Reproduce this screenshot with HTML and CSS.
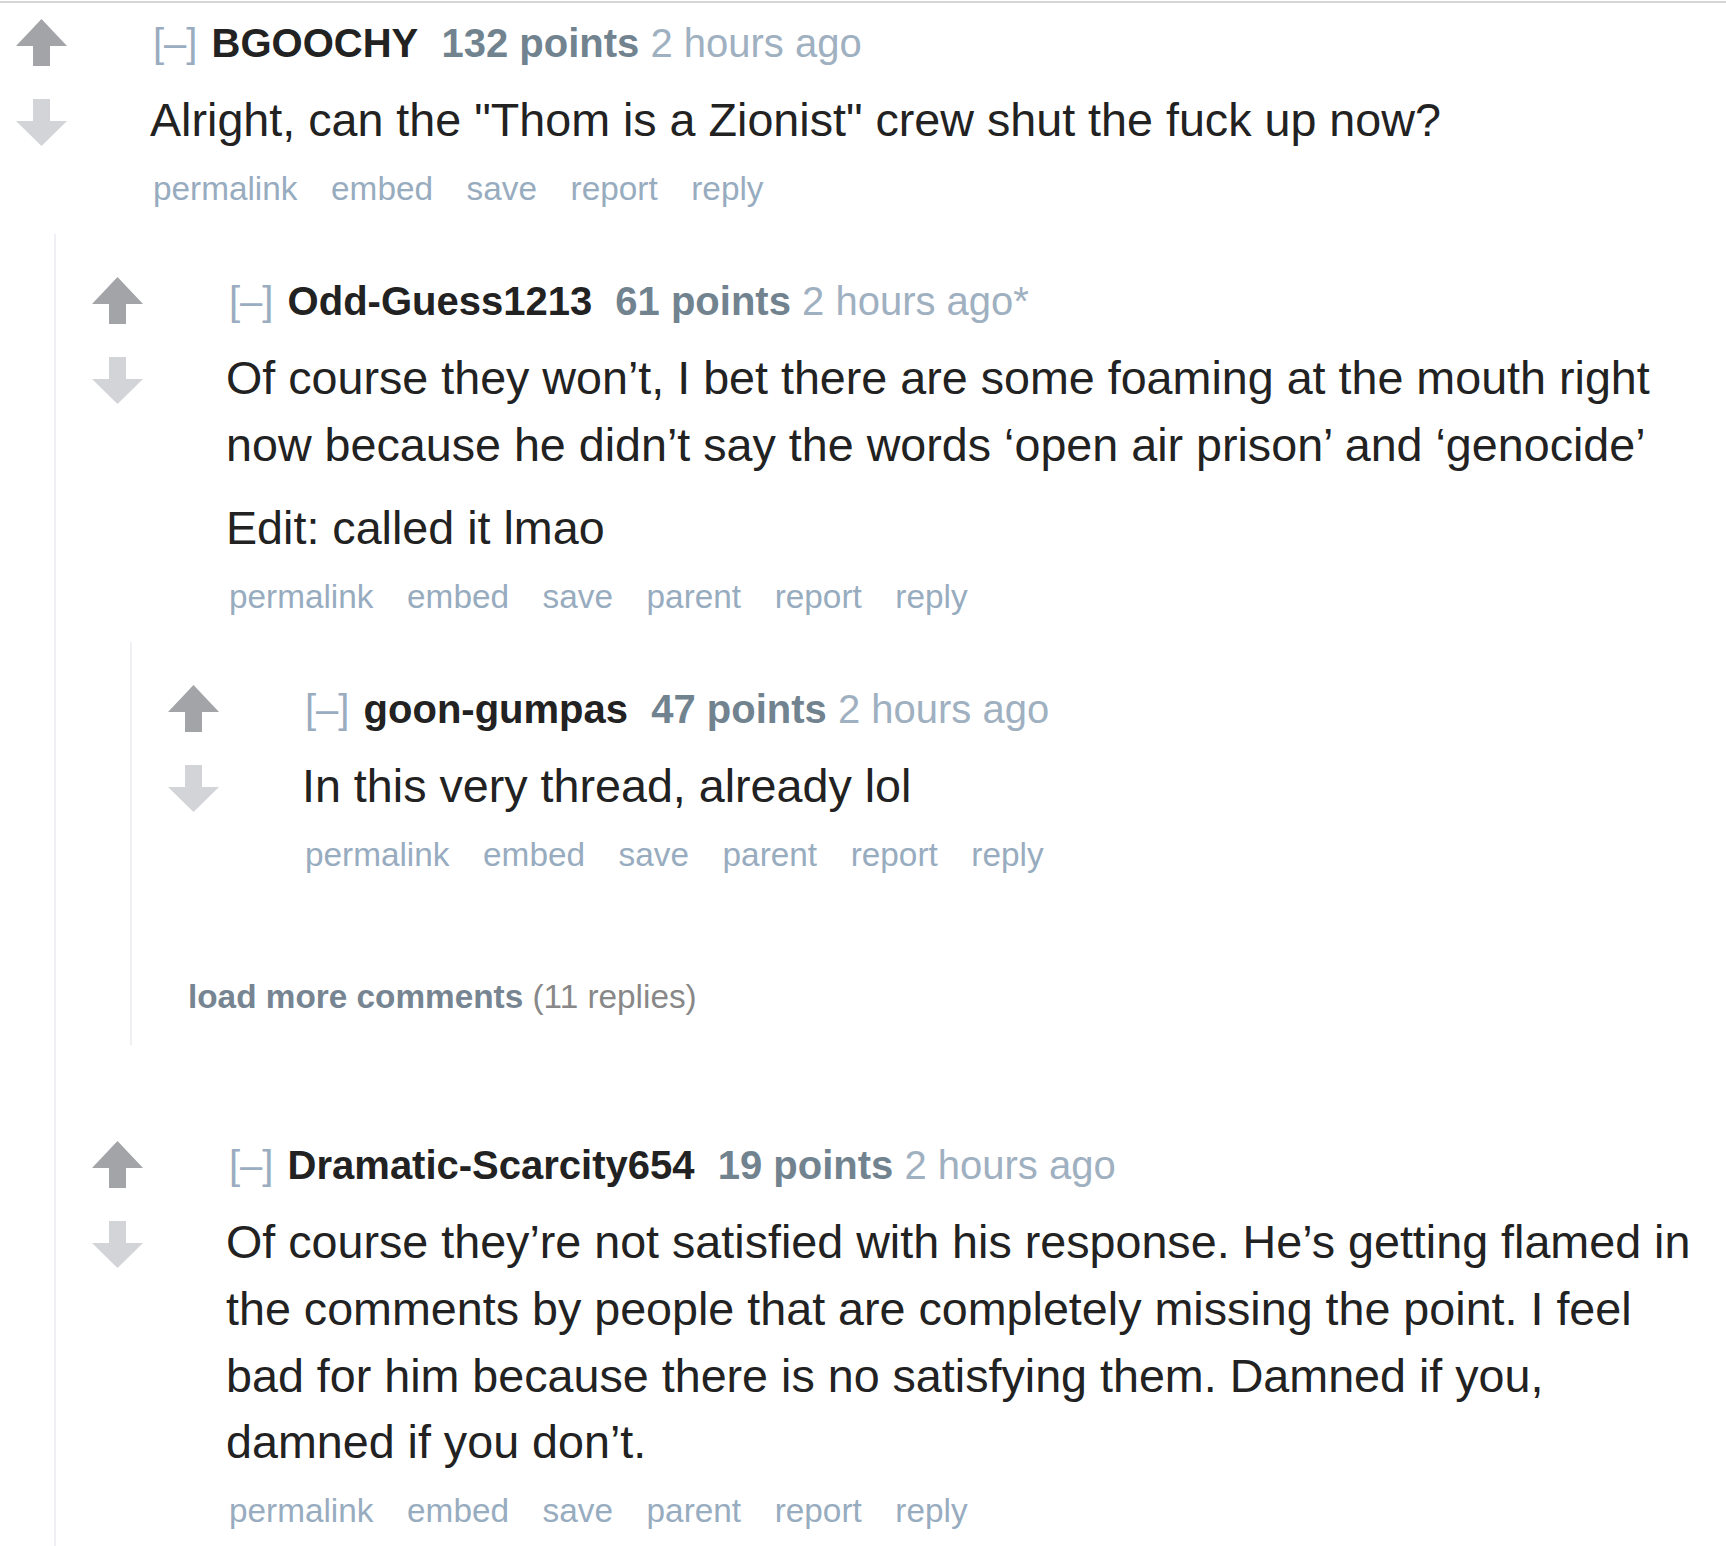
FILE: index.html
```html
<!DOCTYPE html>
<html lang="en">
  <head>
    <meta charset="UTF-8" />
    <meta name="viewport" content="width=device-width, initial-scale=1.0" />
    <title>Comments</title>
    <link rel="stylesheet" href="styles.css">
  </head>
  <body>
    <div class="page">
      <div class="thread">

        <!-- top level comment -->
        <div class="comment">
          <div class="comment-main">
            <div class="midcol">
              <svg class="arrow up" viewBox="0 0 51 47"><polygon points="25.5,0 51,27 34,27 34,47 17,47 17,27 0,27" /></svg>
              <svg class="arrow down" viewBox="0 0 51 47"><polygon points="17,0 34,0 34,22 51,22 25.5,47 0,22 17,22" /></svg>
            </div>
            <div class="entry">
              <p class="tagline"><a class="expand" href="#">[–]</a> <a class="author" href="#">BGOOCHY</a> <span class="score">132 points</span> <time>2 hours ago</time></p>
              <div class="md">
                <p>Alright, can the "Thom is a Zionist" crew shut the fuck up now?</p>
              </div>
              <ul class="buttons">
                <li><a href="#">permalink</a></li>
                <li><a href="#">embed</a></li>
                <li><a href="#">save</a></li>
                <li><a href="#">report</a></li>
                <li><a href="#">reply</a></li>
              </ul>
            </div>
          </div>

          <div class="child">
            <div class="comment">
              <div class="comment-main">
                <div class="midcol">
                  <svg class="arrow up" viewBox="0 0 51 47"><polygon points="25.5,0 51,27 34,27 34,47 17,47 17,27 0,27" /></svg>
                  <svg class="arrow down" viewBox="0 0 51 47"><polygon points="17,0 34,0 34,22 51,22 25.5,47 0,22 17,22" /></svg>
                </div>
                <div class="entry">
                  <p class="tagline"><a class="expand" href="#">[–]</a> <a class="author" href="#">Odd-Guess1213</a> <span class="score">61 points</span> <time>2 hours ago*</time></p>
                  <div class="md">
                    <p>Of course they won’t, I bet there are some foaming at the mouth right now because he didn’t say the words ‘open air prison’ and ‘genocide’</p>
                    <p>Edit: called it lmao</p>
                  </div>
                  <ul class="buttons">
                    <li><a href="#">permalink</a></li>
                    <li><a href="#">embed</a></li>
                    <li><a href="#">save</a></li>
                    <li><a href="#">parent</a></li>
                    <li><a href="#">report</a></li>
                    <li><a href="#">reply</a></li>
                  </ul>
                </div>
              </div>

              <div class="child">
                <div class="comment">
                  <div class="comment-main">
                    <div class="midcol">
                      <svg class="arrow up" viewBox="0 0 51 47"><polygon points="25.5,0 51,27 34,27 34,47 17,47 17,27 0,27" /></svg>
                      <svg class="arrow down" viewBox="0 0 51 47"><polygon points="17,0 34,0 34,22 51,22 25.5,47 0,22 17,22" /></svg>
                    </div>
                    <div class="entry">
                      <p class="tagline"><a class="expand" href="#">[–]</a> <a class="author" href="#">goon-gumpas</a> <span class="score">47 points</span> <time>2 hours ago</time></p>
                      <div class="md">
                        <p>In this very thread, already lol</p>
                      </div>
                      <ul class="buttons">
                        <li><a href="#">permalink</a></li>
                        <li><a href="#">embed</a></li>
                        <li><a href="#">save</a></li>
                        <li><a href="#">parent</a></li>
                        <li><a href="#">report</a></li>
                        <li><a href="#">reply</a></li>
                      </ul>
                    </div>
                  </div>
                </div>

                <div class="morechildren">
                  <a href="#">load more comments</a> <span class="gray">(11 replies)</span>
                </div>
              </div>
            </div>

            <div class="comment">
              <div class="comment-main">
                <div class="midcol">
                  <svg class="arrow up" viewBox="0 0 51 47"><polygon points="25.5,0 51,27 34,27 34,47 17,47 17,27 0,27" /></svg>
                  <svg class="arrow down" viewBox="0 0 51 47"><polygon points="17,0 34,0 34,22 51,22 25.5,47 0,22 17,22" /></svg>
                </div>
                <div class="entry">
                  <p class="tagline"><a class="expand" href="#">[–]</a> <a class="author" href="#">Dramatic-Scarcity654</a> <span class="score">19 points</span> <time>2 hours ago</time></p>
                  <div class="md">
                    <p>Of course they’re not satisfied with his response. He’s getting flamed in the comments by people that are completely missing the point. I feel bad for him because there is no satisfying them. Damned if you, damned if you don’t.</p>
                  </div>
                  <ul class="buttons">
                    <li><a href="#">permalink</a></li>
                    <li><a href="#">embed</a></li>
                    <li><a href="#">save</a></li>
                    <li><a href="#">parent</a></li>
                    <li><a href="#">report</a></li>
                    <li><a href="#">reply</a></li>
                  </ul>
                </div>
              </div>
            </div>
          </div>
        </div>

      </div>
    </div>
  </body>
</html>
```

FILE: styles.css
```css
body {
  margin: 0;
  font-family: "Liberation Sans", Arial, sans-serif;
  background-color: #fff;
  color: #222;
}

a {
  text-decoration: none;
}

.page {
  height: 1546px;
  overflow: hidden;
}

.thread {
  margin-top: 1px;
  border-top: 2px solid #d6d6d6;
}

.comment {
  padding-top: 16px;
}

.comment + .comment {
  margin-top: 80px;
}

.comment-main {
  display: flex;
}

.midcol {
  width: 134px;
  flex: none;
  padding-left: 16px;
  display: flex;
  flex-direction: column;
  gap: 33px;
}

.arrow {
  display: block;
  width: 51px;
  height: 47px;
}

.arrow.up {
  fill: #a3a4a8;
}

.arrow.down {
  fill: #d3d4d8;
}

.entry {
  flex: 1;
  min-width: 0;
  padding-right: 20px;
}

.tagline {
  margin: 0;
  padding-left: 3px;
  font-size: 40px;
  line-height: 48px;
  color: #9fb0c1;
}

.tagline .expand {
  color: #9aacbf;
}

.tagline .author {
  color: #222;
  font-weight: bold;
  margin-left: 3px;
  margin-right: 12px;
}

.tagline .score {
  color: #728390;
  font-weight: bold;
}

.md {
  margin-top: 20px;
  font-size: 46.67px;
  line-height: 66.67px;
}

.md p {
  margin: 0;
}

.md p + p {
  margin-top: 16.67px;
}

.buttons {
  list-style: none;
  margin: 8px 0 0;
  padding: 0 0 0 3px;
  display: flex;
  gap: 33.6px;
  font-size: 33.33px;
  line-height: 53.33px;
}

.buttons a {
  color: #98acc0;
}

.child {
  margin-top: 19px;
  margin-left: 54px;
  border-left: 2px solid #eef0f4;
  padding-left: 20px;
  padding-top: 27px;
  padding-bottom: 22px;
}

.morechildren {
  margin-top: 89px;
  padding-left: 36px;
  font-size: 33.33px;
  line-height: 53.33px;
}

.morechildren a {
  color: #768591;
  font-weight: bold;
}

.morechildren .gray {
  color: #888;
}
```
